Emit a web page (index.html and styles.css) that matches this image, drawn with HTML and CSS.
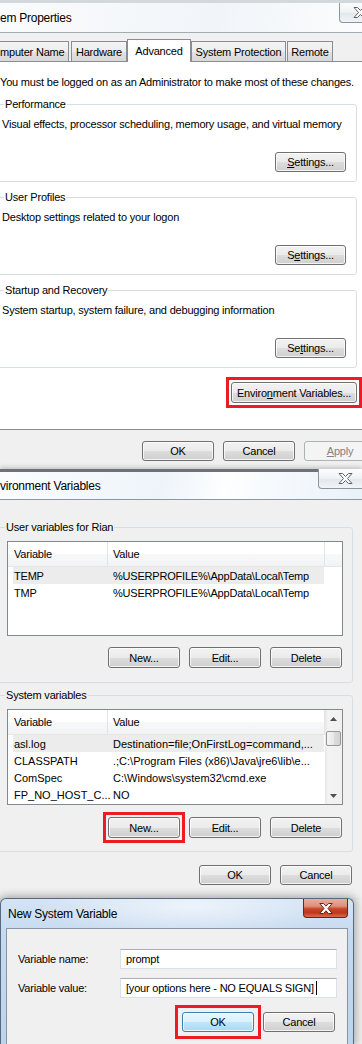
FILE: index.html
```html
<!doctype html>
<html lang="en">
<head>
    <meta charset="UTF-8">
    <meta name="viewport" content="width=device-width, initial-scale=1.0">
    <title>Environment Variables</title>
    <link rel="stylesheet" href="styles.css">
</head>
<body>
<div id="screen">

    <!-- System Properties -->
    <section class="win win_sys">
        <div class="titlebar">
            <span class="title">em Properties</span>
            <span class="close">
                <svg width="15" height="11" viewBox="0 0 15 11"><path d="M1 .5h3.5l3 3 3-3H14L9.5 5.5l4.5 5h-3.5l-3-3-3 3H1l4.5-5z" fill="#fff" stroke="#5e6268"/></svg>
            </span>
        </div>
        <div class="client client_sys">
            <div class="tabs">
                <span class="tab tab_computer">mputer Name</span>
                <span class="tab tab_hardware">Hardware</span>
                <span class="tab tab_active tab_advanced">Advanced</span>
                <span class="tab tab_protection">System Protection</span>
                <span class="tab tab_remote">Remote</span>
            </div>
            <div class="tabpanel">
                <p class="notice">You must be logged on as an Administrator to make most of these changes.</p>

                <div class="group">
                    <span class="group_label">Performance</span>
                    <p class="group_text">Visual effects, processor scheduling, memory usage, and virtual memory</p>
                    <div class="group_actions"><button class="btn btn_settings"><u>S</u>ettings...</button></div>
                </div>

                <div class="group">
                    <span class="group_label">User Profiles</span>
                    <p class="group_text">Desktop settings related to your logon</p>
                    <div class="group_actions"><button class="btn btn_settings">S<u>e</u>ttings...</button></div>
                </div>

                <div class="group">
                    <span class="group_label">Startup and Recovery</span>
                    <p class="group_text">System startup, system failure, and debugging information</p>
                    <div class="group_actions"><button class="btn btn_settings">Se<u>t</u>tings...</button></div>
                </div>

                <div class="env_row">
                    <span class="callout"><button class="btn btn_env">Enviro<u>n</u>ment Variables...</button></span>
                </div>
            </div>
            <div class="dialog_buttons sys_buttons">
                <button class="btn">OK</button>
                <button class="btn">Cancel</button>
                <button class="btn btn_disabled"><u>A</u>pply</button>
            </div>
        </div>
    </section>

    <!-- Environment Variables -->
    <section class="win win_env">
        <div class="titlebar">
            <span class="title">vironment Variables</span>
            <span class="close">
                <svg width="15" height="11" viewBox="0 0 15 11"><path d="M1 .5h3.5l3 3 3-3H14L9.5 5.5l4.5 5h-3.5l-3-3-3 3H1l4.5-5z" fill="#fff" stroke="#5e6268"/></svg>
            </span>
        </div>
        <div class="client env_client">
            <div class="group">
                <span class="group_label">User variables for Rian</span>
                <div class="listview listview_user">
                    <div class="lv_body">
                        <div class="lv_head">
                            <span class="col_name">Variable</span>
                            <span class="col_value">Value</span>
                        </div>
                        <div class="lv_row lv_row_sel">
                            <span class="col_name">TEMP</span>
                            <span class="col_value">%USERPROFILE%\AppData\Local\Temp</span>
                        </div>
                        <div class="lv_row">
                            <span class="col_name">TMP</span>
                            <span class="col_value">%USERPROFILE%\AppData\Local\Temp</span>
                        </div>
                    </div>
                </div>
                <div class="list_actions">
                    <button class="btn">New...</button>
                    <button class="btn">Edit...</button>
                    <button class="btn">Delete</button>
                </div>
            </div>

            <div class="group group_system">
                <span class="group_label">System variables</span>
                <div class="listview listview_system">
                    <div class="lv_body lv_classic">
                        <div class="lv_head">
                            <span class="col_name">Variable</span>
                            <span class="col_value">Value</span>
                        </div>
                        <div class="lv_row lv_row_sel">
                            <span class="col_name">asl.log</span>
                            <span class="col_value">Destination=file;OnFirstLog=command,...</span>
                        </div>
                        <div class="lv_row">
                            <span class="col_name">CLASSPATH</span>
                            <span class="col_value">.;C:\Program Files (x86)\Java\jre6\lib\e...</span>
                        </div>
                        <div class="lv_row">
                            <span class="col_name">ComSpec</span>
                            <span class="col_value">C:\Windows\system32\cmd.exe</span>
                        </div>
                        <div class="lv_row">
                            <span class="col_name">FP_NO_HOST_C...</span>
                            <span class="col_value">NO</span>
                        </div>
                    </div>
                    <div class="scrollbar">
                        <span class="sb_arrow"><svg width="7" height="4" viewBox="0 0 7 4"><path d="M0 4L3.5 0 7 4z" fill="#505050"/></svg></span>
                        <span class="sb_track"><span class="sb_thumb"></span></span>
                        <span class="sb_arrow"><svg width="7" height="4" viewBox="0 0 7 4"><path d="M0 0h7L3.5 4z" fill="#505050"/></svg></span>
                    </div>
                </div>
                <div class="list_actions">
                    <span class="callout"><button class="btn">New...</button></span>
                    <button class="btn">Edit...</button>
                    <button class="btn">Delete</button>
                </div>
            </div>

            <div class="dialog_buttons env_buttons">
                <button class="btn">OK</button>
                <button class="btn">Cancel</button>
            </div>
        </div>
    </section>

    <!-- New System Variable -->
    <section class="stage_new">
        <div class="win_new">
            <div class="titlebar">
                <span class="title">New System Variable</span>
                <span class="close close_red">
                    <svg width="14" height="11" viewBox="0 0 14 11"><path d="M.8.5h3.7l2.5 2.7L9.5.5h3.7L9 5.5l4.2 5H9.5L7 7.8l-2.5 2.7H.8L5 5.5z" fill="#fff" stroke="#6a2417"/></svg>
                </span>
            </div>
            <div class="client new_client">
                <div class="form_grid">
                    <span class="form_label">Variable name:</span>
                    <div class="textbox">prompt</div>
                    <span class="form_label">Variable value:</span>
                    <div class="textbox">[your options here - NO EQUALS SIGN]<span class="caret"></span></div>
                </div>
                <div class="dialog_buttons new_buttons">
                    <span class="callout callout_wide"><button class="btn btn_default">OK</button></span>
                    <button class="btn">Cancel</button>
                </div>
            </div>
        </div>
    </section>

</div>
</body>
</html>
```

FILE: styles.css
```css
* {
    box-sizing: border-box;
}

body {
    margin: 0;
    background: #f0f0f0;
    color: #000;
    font-family: "Liberation Sans", Arial, sans-serif;
    font-size: 11px;
    letter-spacing: -0.2px;
}

p {
    margin: 0;
}

#screen {
    width: 362px;
    height: 1044px;
    overflow: hidden;
}

/* window chrome */

.titlebar {
    display: flex;
    align-items: center;
}

.title {
    font-size: 12px;
    letter-spacing: -0.25px;
    white-space: nowrap;
}

.close {
    flex-shrink: 0;
    align-self: flex-start;
    margin-left: auto;
    display: flex;
    align-items: center;
    justify-content: center;
    border: 1px solid #8c949c;
    border-top: none;
    border-radius: 0 0 4px 4px;
    background: linear-gradient(#fdfdfe, #eef1f4 50%, #e2e7ec 51%, #f1f4f7);
}

.client {
    background: #f0f0f0;
}

/* buttons */

.btn {
    flex-shrink: 0;
    display: flex;
    align-items: center;
    justify-content: center;
    width: 72px;
    height: 21px;
    padding: 0;
    border: 1px solid #707070;
    border-radius: 3px;
    background: linear-gradient(#f2f2f2, #ebebeb 50%, #dddddd 51%, #cfcfcf);
    box-shadow: inset 0 0 0 1px rgba(255, 255, 255, 0.75);
    color: #000;
    font-family: inherit;
    font-size: 11px;
    letter-spacing: inherit;
}

.btn_disabled {
    border-color: #adb2b5;
    background: #f4f4f4;
    box-shadow: none;
    color: #838383;
}

.btn_default {
    border-color: #3c7fb1;
    background: linear-gradient(#eaf6fd, #d9f0fc 50%, #bee6fd 51%, #a7d9f5);
}

.callout {
    display: flex;
    flex-shrink: 0;
    margin: -5px;
    padding: 2px;
    border: 3px solid #ed1c24;
}

.callout_wide {
    margin: -7px;
    padding: 4px;
}

.dialog_buttons {
    display: flex;
    gap: 9px;
}

.dialog_buttons .btn {
    height: 20px;
}

/* System Properties */

.win_sys {
    height: 469px;
}

.win_sys .titlebar {
    height: 33px;
    border-top: 3px solid #d3d8dd;
    border-bottom: 1px solid #a3abb3;
    background: linear-gradient(100deg, #fafbfc, #f1f5f9 60%, #fbfcfd);
}

.win_sys .close {
    width: 43px;
    height: 20px;
    margin-right: -20px;
}

.client_sys {
    height: 436px;
}

.tabs {
    display: flex;
    align-items: flex-end;
    height: 29px;
    padding-top: 6px;
    border-bottom: 1px solid #898c95;
}

.tab {
    display: flex;
    align-items: center;
    justify-content: center;
    flex-shrink: 0;
    height: 20px;
    border: 1px solid #898c95;
    border-bottom: none;
    background: linear-gradient(#f4f4f4, #ededed 50%, #e2e2e2 51%, #d8d8d8);
    white-space: nowrap;
}

.tab_active {
    height: 23px;
    margin-bottom: -1px;
    background: #fff;
}

.tab_computer {
    width: 69px;
    justify-content: flex-start;
    border-left: none;
    margin-right: 2px;
}

.tab_hardware {
    width: 56px;
}

.tab_advanced {
    width: 64px;
}

.tab_protection {
    width: 95px;
}

.tab_remote {
    width: 46px;
    margin-left: 1px;
}

.tabpanel {
    display: flex;
    flex-direction: column;
    padding: 12px 0 26px;
    background: #fff;
    border-bottom: 1px solid #898c95;
}

.notice {
    line-height: 16px;
    white-space: nowrap;
}

.group {
    display: flex;
    flex-direction: column;
    border: 1px solid #d5dfe5;
    border-radius: 3px;
}

.group_label {
    align-self: flex-start;
    margin-top: -9px;
    padding: 0 1px;
    line-height: 16px;
    white-space: nowrap;
}

.tabpanel .group {
    margin: 15px 5px 0 -5px;
    padding: 0 10px 9px 0;
}

.tabpanel .group:first-of-type {
    margin-top: 14px;
}

.tabpanel .group_label {
    margin-left: 8px;
    background: #fff;
}

.group_text {
    margin-top: 4px;
    padding-left: 6px;
    line-height: 16px;
    white-space: nowrap;
}

.group_actions {
    display: flex;
    justify-content: flex-end;
    margin-top: 20px;
}

.btn_settings {
    width: 71px;
    height: 20px;
}

.env_row {
    display: flex;
    justify-content: flex-end;
    margin-top: 14px;
    padding-right: 5px;
}

.btn_env {
    width: 126px;
}

.sys_buttons {
    margin-top: 11px;
    padding-left: 142px;
}

/* Environment Variables */

.win_env {
    height: 429px;
    background: #f0f0f0;
    box-shadow: 0 -2px 4px rgba(0, 0, 0, 0.18);
}

.win_env .titlebar {
    height: 31px;
    border-top: 3px solid #6c7278;
    border-bottom: 1px solid #8e969e;
    background: linear-gradient(100deg, #fbfdff, #eef4fa 45%, #fdfeff 62%, #e9f1f9);
}

.win_env .close {
    width: 54px;
    height: 20px;
    margin-top: -3px;
    margin-right: -10px;
}

.env_client {
    padding-top: 27px;
}

.env_client .group {
    margin: 0 9px 0 -3px;
    padding-bottom: 14px;
}

.env_client .group_system {
    margin-top: 12px;
    padding-bottom: 13px;
}

.env_client .group_label {
    margin-left: 7px;
    background: #f0f0f0;
}

.listview {
    display: flex;
    margin: 6px 9px 0 9px;
    border: 1px solid #828790;
    background: #fff;
    overflow: hidden;
}

.listview_user {
    height: 95px;
}

.listview_system {
    height: 96px;
}

.lv_body {
    flex: 1;
}

.lv_classic {
    letter-spacing: 0;
}

.lv_head {
    display: flex;
    height: 25px;
    border-bottom: 1px solid #e5e5e5;
    background: linear-gradient(#fff, #fff 50%, #f7f8fa 51%, #f2f3f5);
    letter-spacing: -0.2px;
}

.lv_head span {
    display: flex;
    align-items: center;
    border-right: 1px solid #e5e5e5;
}

.lv_head .col_name {
    width: 100px;
    padding-left: 6px;
}

.lv_head .col_value {
    width: 217px;
    padding-left: 5px;
}

.lv_row {
    display: flex;
    align-items: center;
    width: 311px;
    height: 17px;
    margin-left: 5px;
    white-space: nowrap;
}

.lv_row_sel {
    background: #ececec;
}

.lv_row .col_name {
    width: 95px;
    flex-shrink: 0;
    padding-left: 1px;
}

.lv_row .col_value {
    width: 216px;
    padding-left: 5px;
    overflow: hidden;
}

.scrollbar {
    display: flex;
    flex-direction: column;
    width: 17px;
    background: linear-gradient(to right, #e6e6e6, #f3f3f3 3px, #f0f0f0);
}

.sb_arrow {
    display: flex;
    align-items: center;
    justify-content: center;
    height: 17px;
}

.sb_track {
    flex: 1;
    padding: 4px 1px 0;
}

.sb_thumb {
    display: block;
    height: 15px;
    border: 1px solid #979797;
    border-radius: 2px;
    background: linear-gradient(to right, #f4f4f4, #e9e9e9 50%, #dcdcdc 51%, #d4d4d4);
}

.list_actions {
    display: flex;
    justify-content: flex-end;
    gap: 9px;
    margin-top: 11px;
    padding-right: 10px;
}

.group_system .list_actions {
    margin-top: 12px;
}

.env_buttons {
    justify-content: flex-end;
    margin-top: 13px;
    padding-right: 10px;
}

/* New System Variable */

.stage_new {
    height: 146px;
}

.win_new {
    width: 354px;
    height: 146px;
    padding: 0 5px;
    border: 1px solid #56697e;
    border-bottom: none;
    border-radius: 6px 6px 0 0;
    background:
        radial-gradient(ellipse 150px 30px at 190px 8px, rgba(255, 255, 255, 0.6), rgba(255, 255, 255, 0)),
        linear-gradient(#d4e4f5, #c5d9ef 40px, #bed4ec);
    box-shadow: 0 0 9px 2px rgba(0, 0, 0, 0.3);
}

.win_new .titlebar {
    height: 29px;
}

.win_new .title {
    margin-left: 2px;
}

.close_red {
    width: 45px;
    height: 19px;
    border-color: #6b2418;
    background: linear-gradient(#eaae9f, #de8f7a 40%, #c8462c 55%, #bd381c 75%, #d46c4f);
}

.new_client {
    height: 117px;
    padding: 20px 10px 0 11px;
    border: 1px solid #8795a5;
    border-bottom: none;
}

.form_grid {
    display: grid;
    grid-template-columns: 102px 1fr;
    grid-auto-rows: 20px;
    row-gap: 9px;
    align-items: center;
}

.textbox {
    display: flex;
    align-items: center;
    height: 20px;
    padding-left: 5px;
    border: 1px solid #dbdfe6;
    border-top-color: #abadb3;
    background: #fff;
    white-space: nowrap;
}

.caret {
    display: inline-block;
    width: 1px;
    height: 14px;
    margin-left: 2px;
    background: #000;
}

.new_buttons {
    justify-content: flex-end;
    margin-top: 14px;
    padding-right: 2px;
}
```
